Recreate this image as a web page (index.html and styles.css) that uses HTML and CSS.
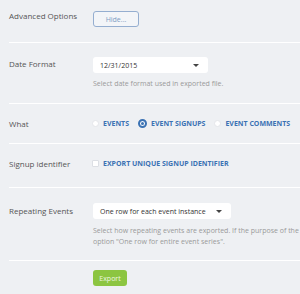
FILE: index.html
```html
<!DOCTYPE html>
<html lang="en">
<head>
    <meta charset="UTF-8">
    <title>Export Options</title>
    <link rel="stylesheet" href="styles.css">
</head>
<body>
    <div class="export-form">
        <div class="row first">
            <div class="label">Advanced Options</div>
            <div class="field">
                <button class="btn-hide">Hide...</button>
            </div>
        </div>

        <div class="row">
            <div class="label">Date Format</div>
            <div class="field">
                <div class="select date-select">
                    <span>12/31/2015</span>
                    <span class="caret"></span>
                </div>
                <p class="help">Select date format used in exported file.</p>
            </div>
        </div>

        <div class="row choice-row">
            <div class="label">What</div>
            <div class="field options">
                <label class="radio"><span class="dot"></span>Events</label>
                <label class="radio checked"><span class="dot"></span>Event signups</label>
                <label class="radio"><span class="dot"></span>Event comments</label>
            </div>
        </div>

        <div class="row choice-row tall">
            <div class="label">Signup identifier</div>
            <div class="field options">
                <label class="check"><span class="box"></span>Export unique signup identifier</label>
            </div>
        </div>

        <div class="row repeat-row">
            <div class="label">Repeating Events</div>
            <div class="field">
                <div class="select repeat-select">
                    <span>One row for each event instance</span>
                    <span class="caret"></span>
                </div>
                <p class="help">Select how repeating events are exported. If the purpose of the export is to get an overview, choose<br>option "One row for entire event series".</p>
            </div>
        </div>

        <div class="row last">
            <div class="label"></div>
            <div class="field">
                <button class="btn-export">Export</button>
            </div>
        </div>
    </div>
</body>
</html>
```

FILE: styles.css
```css
* {
    margin: 0;
    padding: 0;
    box-sizing: border-box;
}

html, body {
    background-color: #eef0f3;
    overflow: hidden;
}

body {
    font-family: 'Open Sans', sans-serif;
    font-size: 8px;
    color: #555;
    padding-left: 9px;
    width: 500px;
}

.row {
    display: flex;
    align-items: flex-start;
    border-top: 1px solid #fff;
    padding: 14px 0;
}

.row.first {
    border-top: none;
    padding: 11px 0 15px;
}

.row.tall {
    padding-bottom: 18px;
}

.row.repeat-row {
    padding: 15px 0 13px;
}

.row.last {
    padding-top: 9px;
}

.label {
    width: 84px;
    flex-shrink: 0;
    line-height: 10px;
    margin-top: 2px;
}

.first .label {
    margin-top: 0;
}

.repeat-row .label {
    margin-top: 3px;
}

.choice-row .label {
    margin-top: 0;
    line-height: 11px;
}

/* Buttons */
.btn-hide {
    font-family: inherit;
    font-size: 7px;
    width: 46px;
    height: 16px;
    color: #7d9cc4;
    background-color: #f3f5f8;
    border: 1px solid #95aed0;
    border-radius: 3px;
}

.btn-export {
    font-family: inherit;
    font-size: 7px;
    width: 34px;
    height: 16px;
    color: #eef7e0;
    background-color: #8cc541;
    border: none;
    border-radius: 3px;
}

/* Selects */
.select {
    display: flex;
    align-items: center;
    justify-content: space-between;
    height: 16px;
    padding: 0 9px 0 7px;
    background-color: #fff;
    border-radius: 3px;
    font-size: 7px;
    color: #333;
}

.date-select {
    width: 115px;
}

.repeat-select {
    width: 138px;
}

.caret {
    width: 0;
    height: 0;
    border-left: 3px solid transparent;
    border-right: 3px solid transparent;
    border-top: 3px solid #444;
}

.help {
    margin-top: 5px;
    font-size: 7px;
    line-height: 11px;
    color: #9a9a9a;
    white-space: nowrap;
}

.repeat-row .help {
    margin-top: 6px;
}

/* Radios and checkbox */
.options {
    display: flex;
    align-items: center;
    gap: 9px;
    height: 11px;
    margin-left: -1px;
}

.radio, .check {
    display: flex;
    align-items: center;
    gap: 4px;
    font-size: 7px;
    font-weight: bold;
    text-transform: uppercase;
    color: #3b72b3;
}

.dot {
    width: 7px;
    height: 7px;
    border-radius: 50%;
    background-color: #fff;
    border: 1px solid #e4e6ea;
}

.radio.checked .dot {
    width: 9px;
    height: 9px;
    background-color: #fff;
    border: 2px solid #3b72b3;
    box-shadow: inset 0 0 0 1px #fff, inset 0 0 0 3px #3b72b3;
}

.box {
    width: 7px;
    height: 7px;
    background-color: #fff;
    border: 1px solid #dcdfe4;
    border-radius: 1px;
}
```
